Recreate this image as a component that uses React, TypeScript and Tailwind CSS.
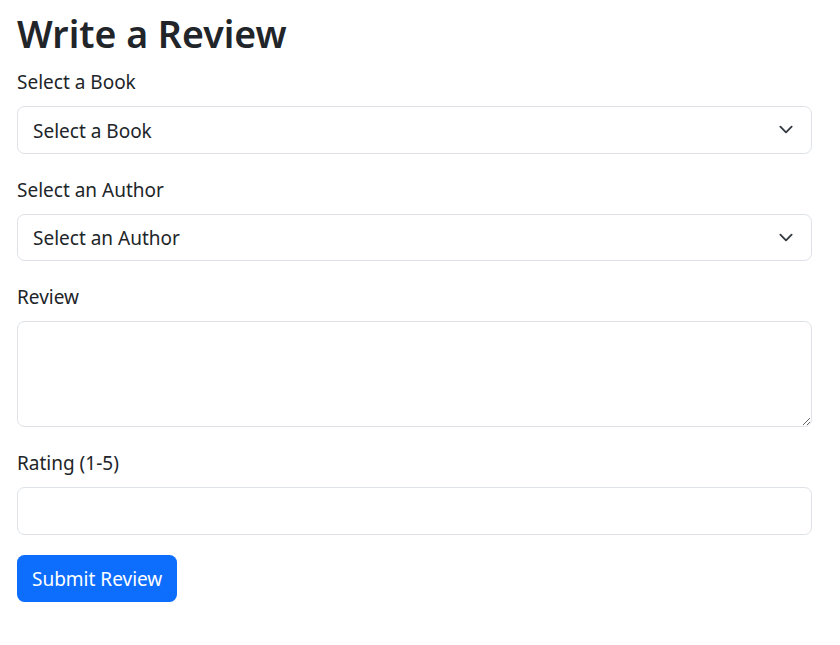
import React from 'react';

const Chevron = () => (
  <svg viewBox="0 0 16 16" className="w-5 h-[15px]" fill="none" stroke="#343a40" strokeWidth={2} strokeLinecap="round" strokeLinejoin="round">
    <path d="m2 5 6 6 6-6" />
  </svg>
);

const SelectBox: React.FC<{ placeholder: string }> = ({ placeholder }) => (
  <div className="flex items-center justify-between h-[47.5px] border border-[#dee2e6] rounded-[7.5px] pl-[15px] pr-[15px] bg-white">
    <span className="text-[#212529] pt-[2px]">{placeholder}</span>
    <Chevron />
  </div>
);

const Label: React.FC<{ children: React.ReactNode }> = ({ children }) => (
  <label className="block leading-[30px] pt-[1px] mb-[9px] text-[#212529]">{children}</label>
);

export default function App() {
  return (
    <div
      className="min-h-screen bg-white pl-[17px] pr-[28px] pt-[8px] text-[19px] text-[#212529]"
      style={{ fontFamily: '"Noto Sans", "Open Sans", sans-serif' }}
    >
      <h1 className="text-[37.5px] leading-[48px] pt-[2px] mb-[8px] font-semibold">Write a Review</h1>

      <div className="mb-[20px]">
        <Label>Select a Book</Label>
        <SelectBox placeholder="Select a Book" />
      </div>

      <div className="mb-[20px]">
        <Label>Select an Author</Label>
        <SelectBox placeholder="Select an Author" />
      </div>

      <div className="mb-[20px]">
        <Label>Review</Label>
        <textarea className="block w-full h-[106px] border border-[#dee2e6] rounded-[7.5px] px-[15px] py-[7.5px] outline-none" />
      </div>

      <div className="mb-[20px]">
        <Label>Rating (1-5)</Label>
        <input type="number" className="block w-full h-[47.5px] border border-[#dee2e6] rounded-[7.5px] px-[15px] outline-none" />
      </div>

      <button className="h-[47.5px] px-[15px] rounded-[7.5px] bg-[#0d6efd] text-white pt-[1px]">Submit Review</button>
    </div>
  );
}
